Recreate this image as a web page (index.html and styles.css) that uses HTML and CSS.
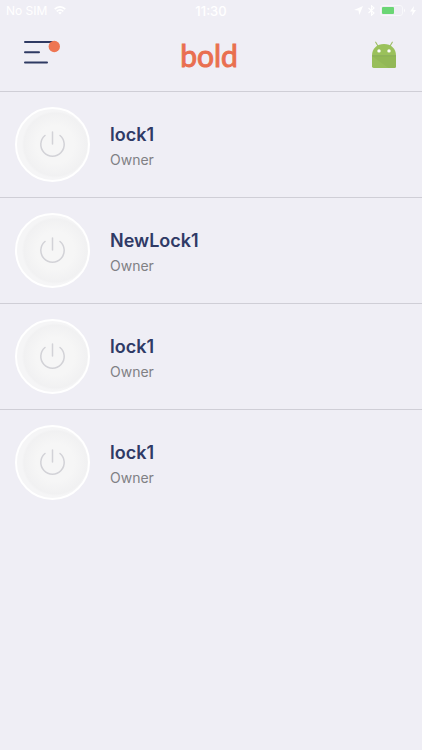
FILE: index.html
```html
<!DOCTYPE html>
<html lang="en">
<head>
<meta charset="utf-8">
<meta name="viewport" content="width=device-width, initial-scale=1">
<title>Bold locks</title>
<link rel="stylesheet" href="styles.css">
</head>
<body>
<svg class="defs" aria-hidden="true">
  <symbol id="power" viewBox="0 0 28 28">
    <path d="M6 4.5A11.7 11.7 0 1 0 21 4.5M13.5 1V13" fill="none" stroke="currentColor" stroke-width="1.5" stroke-linecap="round"/>
  </symbol>
</svg>
<div class="status">
  <div class="carrier">
    <span>No SIM</span>
    <svg width="12" height="9" viewBox="0 0 12 9" fill="none" stroke="currentColor" stroke-width="1.7"><path d="M.7 3.1Q6-1.4 11.3 3.1M2.7 5.3Q6 2.6 9.3 5.3"/><path d="M4.2 6.7Q6 5.3 7.8 6.7L6 8.6Z" fill="currentColor" stroke="none"/></svg>
  </div>
  <span class="time">11:30</span>
  <div class="indicators">
    <svg width="9" height="9" viewBox="0 0 9 9" fill="currentColor"><path d="M9 0L5.3 9L4.5 4.6L0 4Z"/></svg>
    <svg width="7" height="11" viewBox="0 0 7 11" fill="none" stroke="currentColor" stroke-width="1.1"><path d="M.5 3L6 8L3.5 10.3V.7L6 3L.5 8"/></svg>
    <svg width="25" height="11" viewBox="0 0 25 11"><rect x=".5" y=".5" width="22" height="10" rx="2.5" fill="none" stroke="#f8f8fb"/><rect x="2" y="2" width="12" height="7" rx="1" fill="#6bd675"/><path d="M24 3.5Q25.5 5.5 24 7.5Z" fill="currentColor"/></svg>
    <svg width="6" height="10" viewBox="0 0 6 10" fill="currentColor"><path d="M4 0L0 5.6H2.7L1.7 10L6 4H3.4Z"/></svg>
  </div>
</div>
<header class="bar">
  <button class="icon-button" type="button" aria-label="Menu">
    <svg width="38" height="30" viewBox="0 0 38 30"><path d="M3 5H31M3 15.2H17M3 25.4H25" stroke="#2f3a63" stroke-width="2" stroke-linecap="round"/><circle cx="32.3" cy="9.5" r="5.7" fill="#ee7653"/></svg>
  </button>
  <h1 class="logo">bold</h1>
  <button class="icon-button" type="button" aria-label="Profile">
    <svg width="24" height="28" viewBox="0 0 24 28">
      <path d="M3.7 1.2L6.4 5.8M20.3 1.2L17.6 5.8" stroke="#9cbd63" stroke-width="1.1" stroke-linecap="round"/>
      <path d="M0 14.5C0 7.8 5 3.1 12 3.1S24 7.8 24 14.5Z" fill="#9ac15b"/>
      <path d="M0 15H24V25.3Q24 27 22.3 27H1.7Q0 27 0 25.3Z" fill="#98be5a"/>
      <path d="M0 15H24V25.3Q24 27 22.3 27H16.5Z" fill="#92b856"/>
      <path d="M0 14.7H24" stroke="#82a84c"/>
      <circle cx="7" cy="9.9" r="1.7" fill="#fff"/><circle cx="17" cy="9.9" r="1.7" fill="#fff"/>
    </svg>
  </button>
</header>
<main>
  <ul class="locks">
    <li class="lock"><button class="knob" type="button" aria-label="Activate lock1"><svg class="power"><use href="#power"/></svg></button><div class="details"><h2 class="name">lock1</h2><p class="role">Owner</p></div></li>
    <li class="lock"><button class="knob" type="button" aria-label="Activate NewLock1"><svg class="power"><use href="#power"/></svg></button><div class="details"><h2 class="name">NewLock1</h2><p class="role">Owner</p></div></li>
    <li class="lock"><button class="knob" type="button" aria-label="Activate lock1"><svg class="power"><use href="#power"/></svg></button><div class="details"><h2 class="name">lock1</h2><p class="role">Owner</p></div></li>
    <li class="lock"><button class="knob" type="button" aria-label="Activate lock1"><svg class="power"><use href="#power"/></svg></button><div class="details"><h2 class="name">lock1</h2><p class="role">Owner</p></div></li>
  </ul>
</main>
</body>
</html>
```
FILE: styles.css
```css
* {
  box-sizing: border-box;
  margin: 0;
  padding: 0;
}

body {
  min-height: 100vh;
  background: #efeef5;
  font-family: Inter, "Liberation Sans", sans-serif;
}

button {
  border: 0;
  background: none;
}

svg {
  display: block;
}

.defs {
  position: absolute;
  width: 0;
  height: 0;
}

.status {
  display: grid;
  grid-template-columns: 1fr auto 1fr;
  align-items: center;
  height: 21px;
  padding: 0 6px;
  color: #fff;
  font-size: 12px;
}

.carrier,
.indicators {
  display: flex;
  align-items: center;
  gap: 7px;
}

.indicators {
  justify-content: flex-end;
  gap: 5px;
}

.time {
  font-weight: 500;
  font-size: 13px;
}

.bar {
  display: grid;
  grid-template-columns: 1fr auto 1fr;
  align-items: start;
  height: 70px;
  padding: 16px 26px 0 22px;
}

.icon-button {
  justify-self: start;
}

.icon-button:last-child {
  justify-self: end;
  padding-top: 4px;
}

.logo {
  color: #e96f50;
  font: 400 30px/36px Lato, sans-serif;
  -webkit-text-stroke: 1px #e96f50;
  stroke-linejoin: round;
}

.locks {
  list-style: none;
}

.lock {
  display: flex;
  align-items: center;
  gap: 20px;
  height: 106px;
  padding: 0 15px;
  border-top: 1px solid #cfced6;
}

.knob {
  display: grid;
  place-items: center;
  flex: none;
  width: 75px;
  height: 75px;
  border: 2px solid #fff;
  border-radius: 50%;
  background: radial-gradient(circle at 54% 50%, #f6f6f6 0 36%, #f1f1f2 60%, #f5f5f6 64%);
}

.power {
  width: 28px;
  height: 28px;
  color: #d2d2d7;
}

.details {
  padding-top: 2px;
}

.name {
  color: #2f3a66;
  font-size: 18px;
  font-weight: 600;
  line-height: 28px;
}

.role {
  color: #808084;
  font-size: 14px;
  line-height: 22px;
}
```
